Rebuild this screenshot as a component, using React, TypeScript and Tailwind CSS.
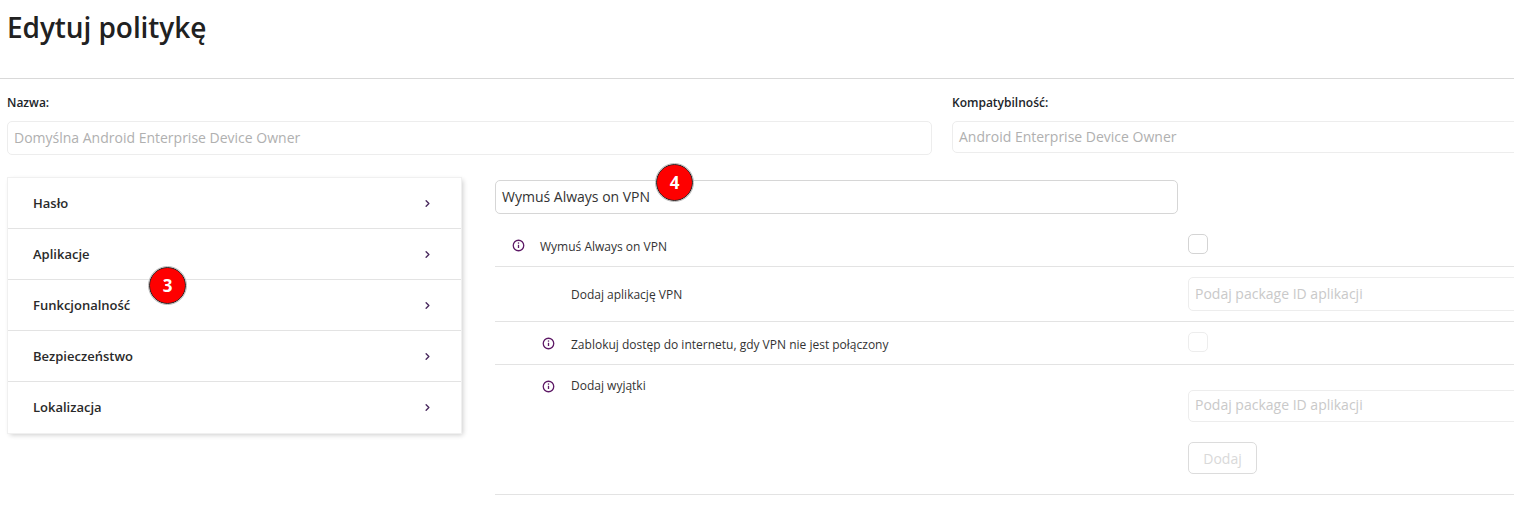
import React from 'react';
import { ChevronRight } from 'lucide-react';

const menuItems = ['Hasło', 'Aplikacje', 'Funkcjonalność', 'Bezpieczeństwo', 'Lokalizacja'];

const InfoIcon = () => (
  <svg width="13" height="13" viewBox="0 0 13 13" fill="none" className="shrink-0 text-[#5e1a66]">
    <circle cx="6.5" cy="6.5" r="5.25" stroke="currentColor" strokeWidth="1.3" />
    <path d="M6.5 5.8v3.2" stroke="currentColor" strokeWidth="1.3" />
    <path d="M6.5 3.4v1.3" stroke="currentColor" strokeWidth="1.3" />
  </svg>
);

const Badge = ({ n, className }: { n: number; className: string }) => (
  <div className={`absolute w-[37px] h-[37px] rounded-full bg-[#fe0000] border-[1.5px] border-[#222] outline outline-1 outline-[#bbb] flex items-center justify-center text-white text-[17px] font-bold ${className}`}>
    {n}
  </div>
);

const DisabledInput = ({ text, className }: { text: string; className: string }) => (
  <div className={`border border-[#ededed] rounded-[5px] flex items-center px-[6px] pb-[2px] text-[14px] text-[#c9c9c9] bg-white ${className}`}>
    {text}
  </div>
);

export default function App() {
  return (
    <div className="relative w-[1514px] h-[505px] overflow-hidden bg-white font-['Open_Sans',sans-serif] text-[#212529]">
      <header className="h-[79px] border-b border-[#d9d9d9] pl-[7px] pt-[7px]">
        <h1 className="text-[28px] leading-[40px] font-semibold tracking-[-0.07px] text-[#212121]">Edytuj politykę</h1>
      </header>

      <div className="flex pl-[7px] pt-[16px] gap-[20px]">
        <div className="w-[925px] shrink-0">
          <div className="text-[12px] leading-[16px] font-semibold mb-[10px]">Nazwa:</div>
          <DisabledInput text="Domyślna Android Enterprise Device Owner" className="h-[34px] text-[#b0b0b0]!" />
        </div>
        <div className="w-[600px] shrink-0">
          <div className="text-[12px] leading-[16px] font-semibold mb-[10px]">Kompatybilność:</div>
          <DisabledInput text="Android Enterprise Device Owner" className="h-[32px] text-[#b0b0b0]!" />
        </div>
      </div>

      <div className="flex pl-[8px] pt-[23px] items-start">
        <nav className="w-[453px] shrink-0 bg-white shadow-[0_0_0_1px_#f0f0f0,2px_2px_5px_rgba(0,0,0,0.2)]">
          {menuItems.map((item, i) => (
            <div
              key={item}
              className={`h-[51px] flex items-center justify-between pl-[25px] pr-[28px] ${i < menuItems.length - 1 ? 'pt-[2px] border-b border-[#e3e3e3]' : 'pt-[1px]'}`}
            >
              <span className="text-[13px] font-semibold text-[#2a2a2a]">{item}</span>
              <ChevronRight size={11} strokeWidth={3} className="text-[#4a2a5e] -mt-[1px]" />
            </div>
          ))}
        </nav>

        <section className="ml-[34px] w-[1100px] shrink-0 pt-[2px]">
          <div className="w-[683px] h-[34px] border border-[#d6d6d6] rounded-[5px] flex items-center px-[6px] pb-[1px] text-[14px] text-[#333]">
            Wymuś Always on VPN
          </div>

          <div className="h-[53px] border-b border-[#e3e3e3] flex pl-[17px]">
            <div className="w-[28px] pt-[25px]"><InfoIcon /></div>
            <div className="w-[648px] pt-[24px] text-[12px] leading-[17px] text-[#333]">Wymuś Always on VPN</div>
            <div className="pt-[20px]">
              <div className="w-[20px] h-[20px] border border-[#d4d4d4] rounded-[5px]" />
            </div>
          </div>

          <div className="h-[55px] border-b border-[#e3e3e3] flex">
            <div className="w-[693px] pl-[76px] pt-[19px] text-[12px] leading-[17px] text-[#333]">Dodaj aplikację VPN</div>
            <div className="pt-[10px] flex-1">
              <DisabledInput text="Podaj package ID aplikacji" className="h-[34px]" />
            </div>
          </div>

          <div className="h-[43px] border-b border-[#e3e3e3] flex">
            <div className="w-[76px] pl-[47px] pt-[15px]"><InfoIcon /></div>
            <div className="w-[617px] pt-[14px] text-[12px] leading-[17px] text-[#333]">Zablokuj dostęp do internetu, gdy VPN nie jest połączony</div>
            <div className="pt-[10px]">
              <div className="w-[20px] h-[20px] border border-[#ededed] rounded-[5px]" />
            </div>
          </div>

          <div className="h-[130px] border-b border-[#e3e3e3] flex">
            <div className="w-[76px] pl-[47px] pt-[15px]"><InfoIcon /></div>
            <div className="w-[617px] pt-[12px] text-[12px] leading-[17px] text-[#333]">Dodaj wyjątki</div>
            <div className="pt-[25px] flex-1">
              <DisabledInput text="Podaj package ID aplikacji" className="h-[32px] pb-[4px]!" />
              <div className="mt-[20px] w-[69px] h-[32px] border border-[#dcdcdc] rounded-[5px] flex items-center justify-center text-[14px] font-medium text-[#d9d9d9]">
                Dodaj
              </div>
            </div>
          </div>
        </section>
      </div>

      <Badge n={3} className="left-[149px] top-[267px]" />
      <Badge n={4} className="left-[656px] top-[164px]" />
    </div>
  );
}
